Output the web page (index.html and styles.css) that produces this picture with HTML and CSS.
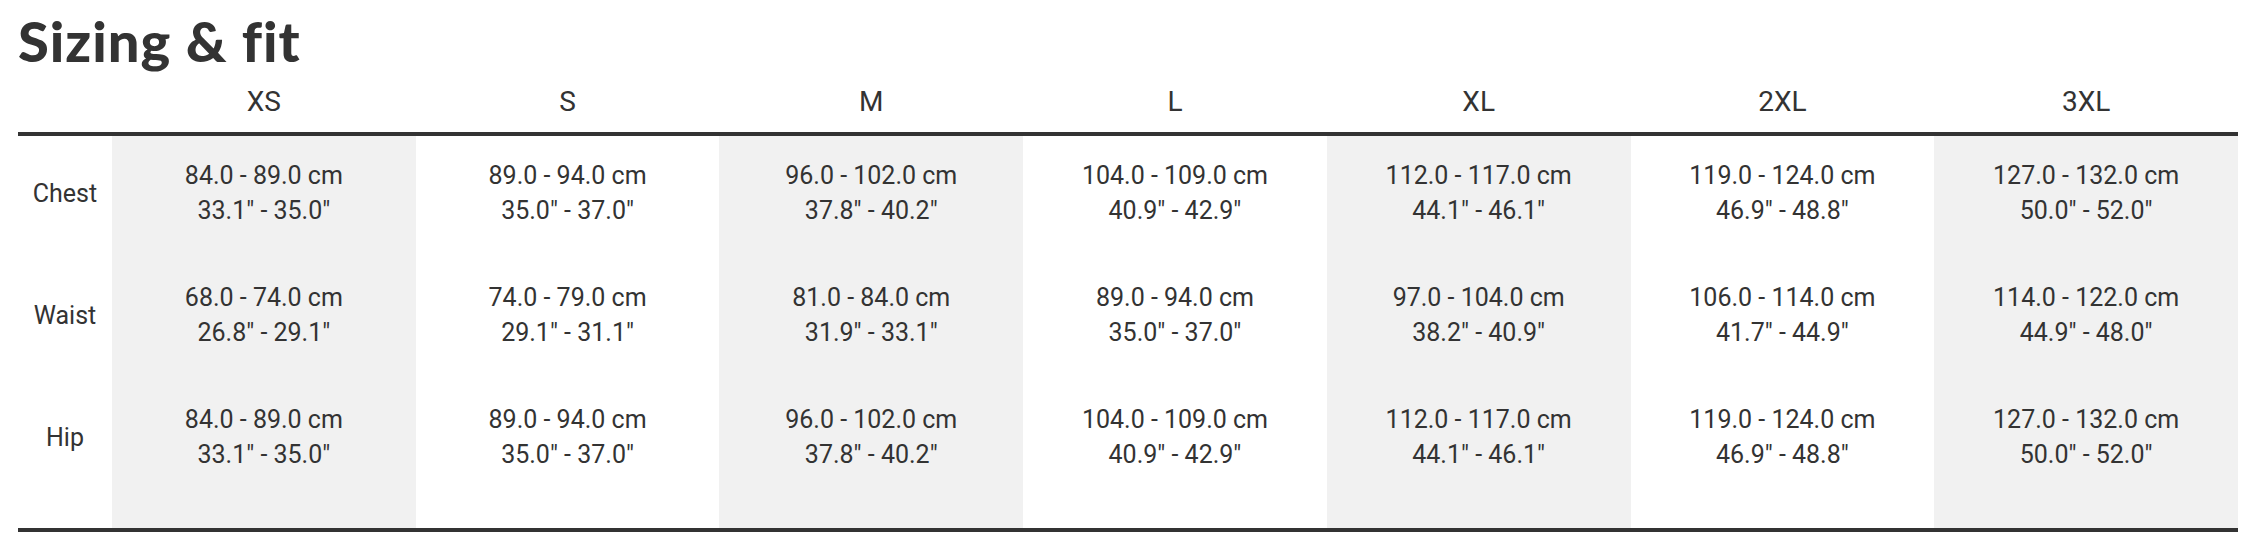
FILE: index.html
```html
<!DOCTYPE html>
<html lang="en">
<head>
<meta charset="utf-8">
<title>Sizing &amp; fit</title>
<link rel="stylesheet" href="styles.css">
</head>
<body>
<section class="sizing">
  <h1 class="sizing-title">Sizing &amp; fit</h1>
  <table class="size-table">
    <colgroup>
      <col class="col-label">
      <col class="col-size col-alt">
      <col class="col-size">
      <col class="col-size col-alt">
      <col class="col-size">
      <col class="col-size col-alt">
      <col class="col-size">
      <col class="col-size col-alt">
    </colgroup>
    <thead>
      <tr>
        <th></th>
        <th>XS</th><th>S</th><th>M</th><th>L</th><th>XL</th><th>2XL</th><th>3XL</th>
      </tr>
    </thead>
    <tbody>
      <tr>
        <th class="row-label">Chest</th>
        <td>84.0 - 89.0 cm<br>33.1" - 35.0"</td>
        <td>89.0 - 94.0 cm<br>35.0" - 37.0"</td>
        <td>96.0 - 102.0 cm<br>37.8" - 40.2"</td>
        <td>104.0 - 109.0 cm<br>40.9" - 42.9"</td>
        <td>112.0 - 117.0 cm<br>44.1" - 46.1"</td>
        <td>119.0 - 124.0 cm<br>46.9" - 48.8"</td>
        <td>127.0 - 132.0 cm<br>50.0" - 52.0"</td>
      </tr>
      <tr>
        <th class="row-label">Waist</th>
        <td>68.0 - 74.0 cm<br>26.8" - 29.1"</td>
        <td>74.0 - 79.0 cm<br>29.1" - 31.1"</td>
        <td>81.0 - 84.0 cm<br>31.9" - 33.1"</td>
        <td>89.0 - 94.0 cm<br>35.0" - 37.0"</td>
        <td>97.0 - 104.0 cm<br>38.2" - 40.9"</td>
        <td>106.0 - 114.0 cm<br>41.7" - 44.9"</td>
        <td>114.0 - 122.0 cm<br>44.9" - 48.0"</td>
      </tr>
      <tr>
        <th class="row-label">Hip</th>
        <td>84.0 - 89.0 cm<br>33.1" - 35.0"</td>
        <td>89.0 - 94.0 cm<br>35.0" - 37.0"</td>
        <td>96.0 - 102.0 cm<br>37.8" - 40.2"</td>
        <td>104.0 - 109.0 cm<br>40.9" - 42.9"</td>
        <td>112.0 - 117.0 cm<br>44.1" - 46.1"</td>
        <td>119.0 - 124.0 cm<br>46.9" - 48.8"</td>
        <td>127.0 - 132.0 cm<br>50.0" - 52.0"</td>
      </tr>
    </tbody>
  </table>
</section>
</body>
</html>
```

FILE: styles.css
```css
html, body {
  margin: 0;
  padding: 0;
  background: #ffffff;
}

body {
  color: #333333;
  font-family: Roboto, "Liberation Sans", sans-serif;
}

.sizing {
  padding: 0 18px;
}

.sizing-title {
  margin: 13px 0 0;
  font-family: Lato, "Liberation Sans", sans-serif;
  font-weight: 900;
  font-size: 56px;
  line-height: 56px;
  color: #333333;
  letter-spacing: 1px;
}

.size-table {
  width: 2220px;
  table-layout: fixed;
  border-collapse: collapse;
  border-bottom: 4px solid #333333;
}

.col-label {
  width: 94px;
}

.col-alt {
  background: #f1f1f1;
}

.size-table thead th {
  background: #ffffff;
  font-weight: 400;
  font-size: 28px;
  line-height: 36px;
  padding: 15px 0 12px;
  text-align: center;
  border-bottom: 4px solid #333333;
}

.size-table td,
.size-table .row-label {
  font-size: 25px;
  line-height: 35px;
  font-weight: 400;
  text-align: center;
  vertical-align: middle;
  padding: 22px 0 30px;
}

.size-table .row-label {
  background: #ffffff;
}

.size-table tbody tr:last-child td,
.size-table tbody tr:last-child .row-label {
  padding-bottom: 56px;
}
```
